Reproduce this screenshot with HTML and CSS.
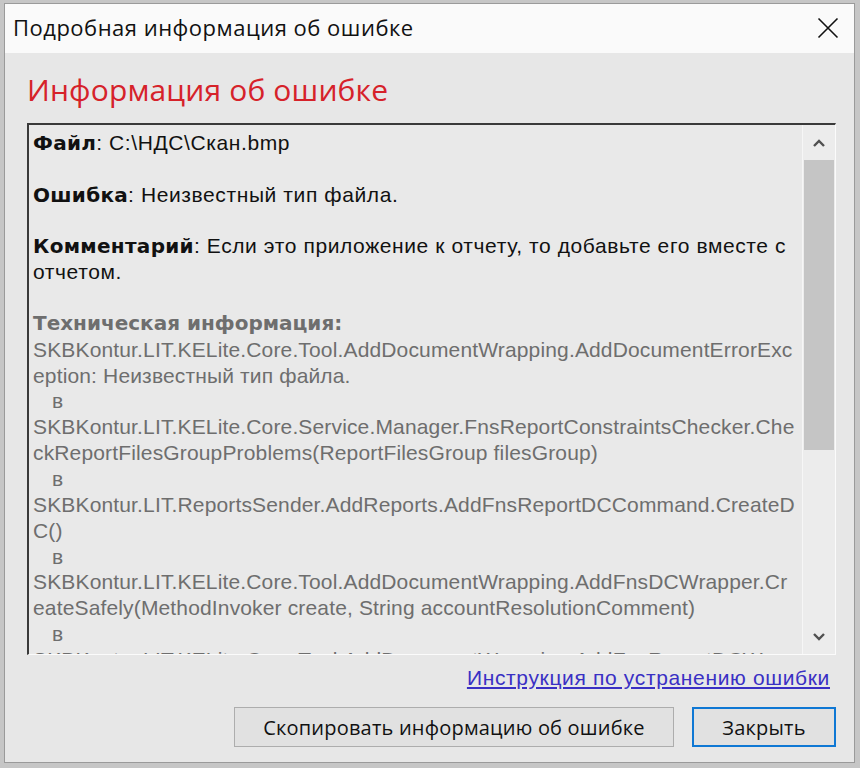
FILE: index.html
```html
<!DOCTYPE html>
<html lang="ru">
<head>
<meta charset="utf-8">
<title>Подробная информация об ошибке</title>
<link rel="stylesheet" href="styles.css">
</head>
<body>
<div class="window">
  <div class="titlebar">
    <span class="title">Подробная информация об ошибке</span>
    <span class="close" aria-label="Закрыть">
      <svg width="22" height="22" viewBox="0 0 22 22"><path d="M1.5 1.5 L20.5 20.5 M20.5 1.5 L1.5 20.5" stroke="#111" stroke-width="1.6" fill="none"/></svg>
    </span>
  </div>
  <div class="body">
    <h1 class="heading">Информация об ошибке</h1>
    <div class="textbox">
      <div class="text">
        <p class="para"><b class="label">Файл</b>: C:\НДС\Скан.bmp</p>
        <p class="para"><b class="label">Ошибка</b>: Неизвестный тип файла.</p>
        <p class="para"><b class="label">Комментарий</b>: Если это приложение к отчету, то добавьте его вместе с<br>отчетом.</p>
        <div class="tech">
          <div class="line tech-title">Техническая информация:</div>
          <div class="line">SKBKontur.LIT.KELite.Core.Tool.AddDocumentWrapping.AddDocumentErrorExc</div>
          <div class="line">eption: Неизвестный тип файла.</div>
          <div class="line indent">в</div>
          <div class="line">SKBKontur.LIT.KELite.Core.Service.Manager.FnsReportConstraintsChecker.Che</div>
          <div class="line">ckReportFilesGroupProblems(ReportFilesGroup filesGroup)</div>
          <div class="line indent">в</div>
          <div class="line">SKBKontur.LIT.ReportsSender.AddReports.AddFnsReportDCCommand.CreateD</div>
          <div class="line">C()</div>
          <div class="line indent">в</div>
          <div class="line">SKBKontur.LIT.KELite.Core.Tool.AddDocumentWrapping.AddFnsDCWrapper.Cr</div>
          <div class="line">eateSafely(MethodInvoker create, String accountResolutionComment)</div>
          <div class="line indent">в</div>
          <div class="line">SKBKontur.LIT.KELite.Core.Tool.AddDocumentWrapping.AddFnsReportDCWr</div>
        </div>
      </div>
      <div class="scrollbar">
        <div class="sb-btn">
          <svg width="12" height="8" viewBox="0 0 12 8"><path d="M1 7 L6 2 L11 7" stroke="#505050" stroke-width="2.4" fill="none"/></svg>
        </div>
        <div class="sb-track"><div class="sb-thumb"></div></div>
        <div class="sb-btn">
          <svg width="12" height="8" viewBox="0 0 12 8"><path d="M1 1 L6 6 L11 1" stroke="#505050" stroke-width="2.4" fill="none"/></svg>
        </div>
      </div>
    </div>
    <div class="linkrow"><a class="link" href="#">Инструкция по устранению ошибки</a></div>
    <div class="buttons">
      <button class="btn btn-copy">Скопировать информацию об ошибке</button>
      <button class="btn btn-close">Закрыть</button>
    </div>
  </div>
</div>
</body>
</html>
```
FILE: styles.css
```css
html, body {
  margin: 0;
  padding: 0;
}
body {
  background: #c6c6c6;
  padding: 3px 5px 5px 4px;
  width: 860px;
  height: 768px;
  box-sizing: border-box;
  font-family: "Liberation Sans", Arial, sans-serif;
  overflow: hidden;
}
.window {
  width: 851px;
  height: 760px;
  box-sizing: border-box;
  border: 1px solid #9a9a9a;
  background: #e7e7e7;
  display: flex;
  flex-direction: column;
}
.titlebar {
  height: 49px;
  background: #fafafa;
  display: flex;
  align-items: center;
  justify-content: space-between;
  padding-left: 8px;
  padding-right: 15px;
  flex: none;
}
.title {
  font-family: "Open Sans", "Liberation Sans", sans-serif;
  font-size: 22px;
  color: #111;
  letter-spacing: 0.5px;
  margin-top: -4px;
}
.close {
  display: flex;
  width: 22px;
  height: 22px;
  margin-top: -2px;
}
.body {
  padding: 0 18px 0 22px;
  display: flex;
  flex-direction: column;
}
.heading {
  margin: 19px 0 0 0;
  font-family: "Open Sans", "Liberation Sans", sans-serif;
  font-weight: normal;
  font-size: 30px;
  line-height: 36px;
  height: 36px;
  color: #d6222a;
  letter-spacing: 0.15px;
}
.textbox {
  margin-top: 15px;
  height: 532px;
  box-sizing: border-box;
  border-top: 2px solid #3a3a3a;
  border-left: 2px solid #3a3a3a;
  border-right: 1px solid #fbfbfb;
  border-bottom: 1px solid #fbfbfb;
  display: flex;
  background: #e9e9e9;
}
.text {
  flex: 1;
  overflow: hidden;
  padding: 5px 0 0 4px;
  font-size: 21px;
  line-height: 25.85px;
  color: #111;
  white-space: nowrap;
}
.para {
  margin: 0 0 25.85px 0;
  letter-spacing: 0.6px;
}
.label {
  font-family: "DejaVu Sans", "Liberation Sans", sans-serif;
  font-weight: bold;
  font-size: 20px;
  line-height: 1;
  letter-spacing: 0.3px;
}
.tech {
  color: #6e6e6e;
  letter-spacing: 0.15px;
}
.tech-title {
  font-family: "DejaVu Sans", "Liberation Sans", sans-serif;
  font-weight: bold;
  font-size: 20px;
  letter-spacing: 0;
}
.indent {
  padding-left: 19px;
}
.scrollbar {
  width: 32px;
  flex: none;
  border-left: 1px solid #f6f6f6;
  background: #ececec;
  display: flex;
  flex-direction: column;
}
.sb-btn {
  height: 35px;
  display: flex;
  align-items: center;
  justify-content: center;
  flex: none;
}
.sb-track {
  flex: 1;
  padding: 0 1px;
}
.sb-thumb {
  height: 290px;
  background: #c5c5c5;
}
.linkrow {
  margin-top: 11px;
  height: 24px;
  line-height: 24px;
  text-align: right;
  padding-right: 6px;
}
.link {
  font-size: 21px;
  color: #3a30c4;
  text-decoration: underline;
  letter-spacing: 0.65px;
}
.buttons {
  margin-top: 17px;
  display: flex;
  justify-content: flex-end;
  gap: 18px;
}
.btn {
  height: 40px;
  font-family: "Open Sans", "Liberation Sans", sans-serif;
  font-size: 20px;
  color: #111;
  background: #e1e1e1;
  border: 1px solid #adadad;
  padding: 0;
  margin: 0;
  letter-spacing: 0.2px;
}
.btn-copy {
  width: 440px;
}
.btn-close {
  width: 144px;
  border: 2px solid #0f78d4;
}
```
